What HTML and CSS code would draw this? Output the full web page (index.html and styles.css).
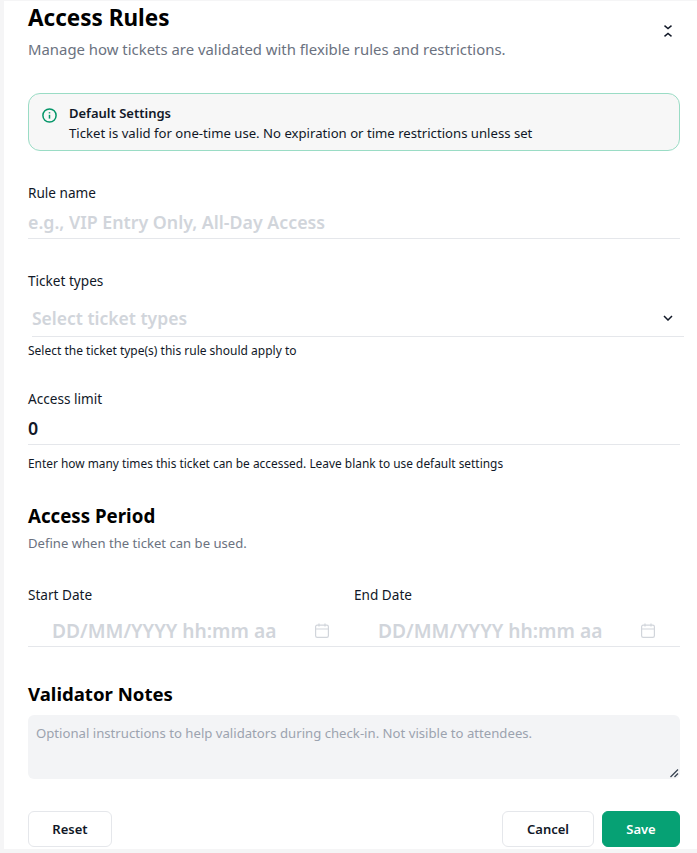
FILE: index.html
```html
<!DOCTYPE html>
<html lang="en">
<head>
  <meta charset="UTF-8">
  <title>Access Rules</title>
  <link rel="stylesheet" href="styles.css">
</head>
<body>
  <div class="panel">
    <div class="panel-head">
      <div>
        <h1>Access Rules</h1>
        <p class="subtitle">Manage how tickets are validated with flexible rules and restrictions.</p>
      </div>
      <button class="collapse-btn" title="Collapse">
        <svg width="8" height="12" viewBox="0 0 8 12" fill="none" stroke="#111827" stroke-width="1.4">
          <path d="M0.5 0.6L4 3.6l3.5-3"/>
          <path d="M0.5 11.4L4 8.4l3.5 3"/>
        </svg>
      </button>
    </div>

    <div class="notice">
      <svg class="notice-icon" width="15" height="15" viewBox="0 0 15 15" fill="none" stroke="#059669" stroke-width="1.5">
        <circle cx="7.5" cy="7.5" r="6.6"/>
        <path d="M7.5 6.8v3.8"/>
        <path d="M7.5 4.2v1.2"/>
      </svg>
      <div>
        <div class="notice-title">Default Settings</div>
        <div class="notice-text">Ticket is valid for one-time use. No expiration or time restrictions unless set</div>
      </div>
    </div>

    <div class="field field-name">
      <label>Rule name</label>
      <input class="line-input" type="text" placeholder="e.g., VIP Entry Only, All-Day Access">
    </div>

    <div class="field field-types">
      <label>Ticket types</label>
      <div class="select-box">
        <span>Select ticket types</span>
        <svg width="10" height="6" viewBox="0 0 10 6" fill="none" stroke="#111827" stroke-width="1.5">
          <path d="M1 1l4 4 4-4"/>
        </svg>
      </div>
      <div class="hint">Select the ticket type(s) this rule should apply to</div>
    </div>

    <div class="field field-limit">
      <label>Access limit</label>
      <input class="line-input" type="text" value="0">
      <div class="hint hint-limit">Enter how many times this ticket can be accessed. Leave blank to use default settings</div>
    </div>

    <h2 class="period-title">Access Period</h2>
    <p class="period-sub">Define when the ticket can be used.</p>

    <div class="dates">
      <div class="date-col">
        <label>Start Date</label>
        <div class="date-box">
          <span>DD/MM/YYYY hh:mm aa</span>
          <svg width="14" height="15" viewBox="0 0 14 15" fill="none" stroke="#d1d5db" stroke-width="1.2">
            <rect x="0.6" y="2.1" width="12.8" height="12.3" rx="1.6"/>
            <path d="M0.6 6h12.8M4 0.4v3M10 0.4v3"/>
          </svg>
        </div>
      </div>
      <div class="date-col">
        <label>End Date</label>
        <div class="date-box">
          <span>DD/MM/YYYY hh:mm aa</span>
          <svg width="14" height="15" viewBox="0 0 14 15" fill="none" stroke="#d1d5db" stroke-width="1.2">
            <rect x="0.6" y="2.1" width="12.8" height="12.3" rx="1.6"/>
            <path d="M0.6 6h12.8M4 0.4v3M10 0.4v3"/>
          </svg>
        </div>
      </div>
    </div>

    <h2 class="notes-title">Validator Notes</h2>
    <div class="notes-wrap">
      <textarea class="notes" placeholder="Optional instructions to help validators during check-in. Not visible to attendees."></textarea>
      <svg class="notes-grip" width="9" height="9" viewBox="0 0 9 9" fill="none" stroke="#374151" stroke-width="1.2">
        <path d="M0.5 8L8 0.5"/>
        <path d="M4.5 8L8 4.5"/>
      </svg>
    </div>

    <div class="actions">
      <button class="btn">Reset</button>
      <div class="actions-right">
        <button class="btn btn-cancel">Cancel</button>
        <button class="btn btn-save">Save</button>
      </div>
    </div>
  </div>
</body>
</html>
```

FILE: styles.css
```css
* {
  box-sizing: border-box;
}
html, body {
  height: 100%;
}
body {
  margin: 0;
  background: #f5f5f6;
  font-family: "Noto Sans", "Open Sans", sans-serif;
  color: #111827;
  overflow: hidden;
}
.panel {
  margin: 1px 0 0 4px;
  height: 848px;
  background: #fff;
  padding: 0 17px 0 24px;
}
label {
  display: block;
  font-size: 13.6px;
  line-height: 18px;
  color: #111827;
}
.panel-head {
  display: flex;
  justify-content: space-between;
}
h1 {
  margin: 1px 0 0;
  font-size: 22.5px;
  line-height: 32px;
  font-weight: 700;
  color: #000;
}
.subtitle {
  margin: 4px 0 0;
  font-size: 14.9px;
  line-height: 22px;
  color: #6b7280;
}
.collapse-btn {
  background: none;
  border: none;
  padding: 0;
  margin: 24px 8px 0 0;
  height: 12px;
  line-height: 0;
}
.notice {
  margin-top: 33px;
  height: 58px;
  display: flex;
  gap: 12px;
  padding: 9px 13px;
  background: #f7f7f7;
  border: 1px solid #9adcc5;
  border-radius: 12px;
  font-size: 13.15px;
  line-height: 20px;
}
.notice-icon {
  margin-top: 5px;
  flex: none;
}
.notice-title {
  font-size: 13px;
  font-weight: 600;
}
.field-name {
  margin-top: 33px;
}
.field-types {
  margin-top: 33px;
}
.field-limit {
  margin-top: 30px;
}
.line-input {
  display: block;
  width: 100%;
  height: 37px;
  border: none;
  border-bottom: 1px solid #e5e7eb;
  outline: none;
  padding: 4px 0 0;
  font-family: inherit;
  font-size: 17.8px;
  font-weight: 600;
  color: #111827;
  background: none;
}
.line-input::placeholder {
  color: #d1d5db;
}
.select-box {
  margin: 8px -4px 0 4px;
  height: 39px;
  display: flex;
  align-items: center;
  justify-content: space-between;
  padding: 2px 11px 0 0;
  border-bottom: 1px solid #e5e7eb;
  font-size: 17.5px;
  font-weight: 600;
  color: #d1d5db;
}
.hint {
  margin-top: 5px;
  font-size: 12px;
  line-height: 18px;
  color: #111827;
}
.hint-limit {
  margin-top: 9px;
  font-size: 11.9px;
}
.period-title {
  margin: 30px 0 0;
  font-size: 18.7px;
  line-height: 28px;
  font-weight: 700;
  color: #000;
}
.period-sub {
  margin: 4px 0 0;
  font-size: 13.1px;
  line-height: 18px;
  color: #6b7280;
}
.dates {
  margin-top: 34px;
  display: flex;
  border-bottom: 1px solid #e5e7eb;
}
.date-col {
  flex: 1;
}
.date-box {
  margin-top: 8px;
  height: 34px;
  display: flex;
  align-items: center;
  justify-content: space-between;
  padding: 2px 25px 0 24px;
  font-size: 19.2px;
  font-weight: 600;
  color: #d1d5db;
}
.notes-title {
  margin: 33px 0 0;
  font-size: 18.6px;
  line-height: 28px;
  font-weight: 700;
  color: #000;
}
.notes-wrap {
  position: relative;
  margin-top: 7px;
}
.notes {
  display: block;
  width: 100%;
  height: 64px;
  border: none;
  outline: none;
  resize: none;
  background: #f3f4f6;
  border-radius: 6px;
  padding: 8px;
  font-family: inherit;
  font-size: 13.17px;
  line-height: 20px;
}
.notes::placeholder {
  color: #9ca3af;
}
.notes-grip {
  position: absolute;
  right: 1px;
  bottom: 1px;
  pointer-events: none;
}
.actions {
  margin-top: 32px;
  display: flex;
  justify-content: space-between;
}
.actions-right {
  display: flex;
  gap: 8px;
}
.btn {
  width: 84px;
  height: 36px;
  background: #fff;
  border: 1px solid #e5e7eb;
  border-radius: 6px;
  font-family: inherit;
  font-size: 13px;
  font-weight: 600;
  color: #111827;
  cursor: pointer;
}
.btn-cancel {
  width: 92px;
}
.btn-save {
  width: 78px;
  background: #06a174;
  border-color: #06a174;
  color: #fff;
}
```
